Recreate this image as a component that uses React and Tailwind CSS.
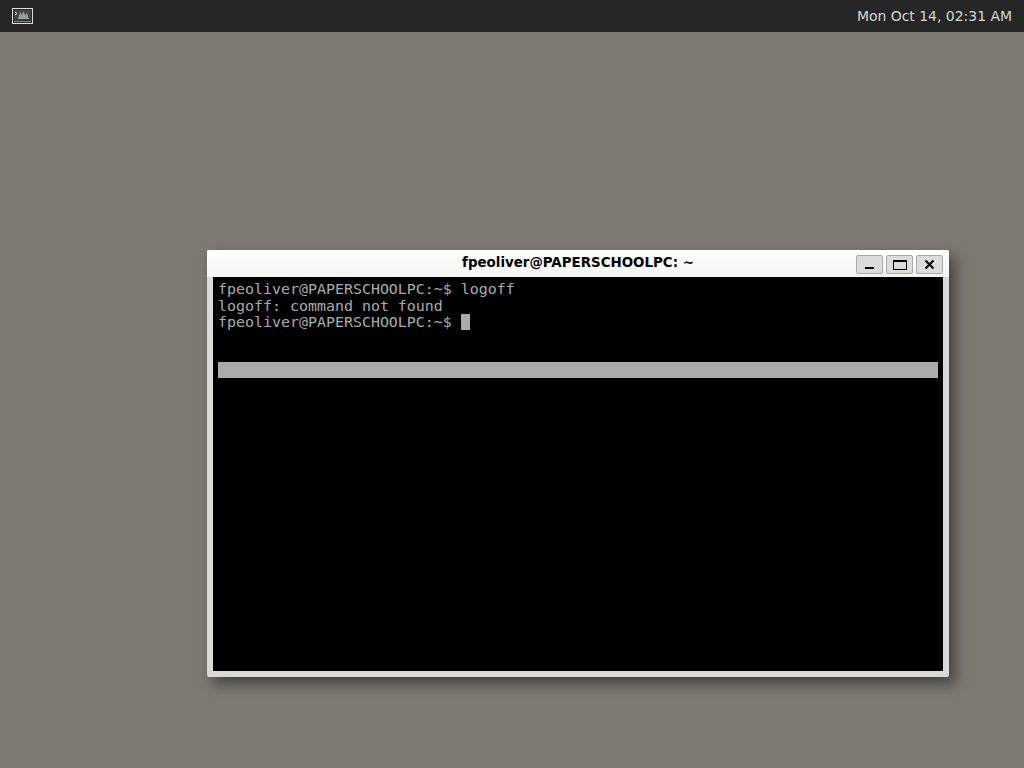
const lines = [
  'fpeoliver@PAPERSCHOOLPC:~$ logoff',
  'logoff: command not found',
];

function TermIcon() {
  return (
    <svg width="21" height="16" viewBox="0 0 21 16" className="block">
      <rect x="0.5" y="0.5" width="20" height="15" fill="#2b2b2b" stroke="#dcdcdc" />
      <rect x="2" y="2" width="17" height="10" fill="#3d4242" />
      <path d="M3 4l2 1.5L3 7" fill="none" stroke="#e6e6e6" />
      <path d="M6 11l2-7 2 3 1.5-4 1.5 4 2-2 2 6z" fill="#9a9d9d" />
      <rect x="2" y="13" width="17" height="1" fill="#8a8a8a" />
    </svg>
  );
}

function WinButton({ children }) {
  return (
    <div className="flex h-[19px] w-[27px] items-center justify-center rounded-[2px] border border-[#a8a8a6] bg-[#dcdcda]">
      {children}
    </div>
  );
}

export default function App() {
  return (
    <div className="relative h-[768px] w-[1024px] overflow-hidden bg-[#7d7973] font-['DejaVu_Sans',sans-serif]">
      <div className="flex h-8 items-center justify-between bg-[#262626] pl-3 pr-3">
        <TermIcon />
        <span className="text-[13.95px] text-[#d6d6d6]">Mon Oct 14, 02:31 AM</span>
      </div>

      {/* terminal window */}
      <div className="absolute left-[207px] top-[250px] flex h-[427px] w-[742px] flex-col rounded-[2px] bg-[#d9d9d7] px-[6px] pb-[6px] shadow-[6px_7px_14px_rgba(30,30,28,0.6)]">
        <div className="relative -mx-[6px] flex h-[27px] items-center justify-center rounded-t-[2px] bg-gradient-to-b from-white to-[#f4f4f3]">
          <div className="text-[13.4px] font-bold text-black">fpeoliver@PAPERSCHOOLPC: ~</div>
          <div className="absolute right-[6px] top-[5px] flex gap-[3px]">
            <WinButton>
              <span className="mt-[7px] block h-[2px] w-[9px] bg-black" />
            </WinButton>
            <WinButton>
              <span className="block h-[10px] w-[14px] border border-t-2 border-black" />
            </WinButton>
            <WinButton>
              <svg width="11" height="11" viewBox="0 0 11 11">
                <path d="M1.5 1.5l8 8M9.5 1.5l-8 8" stroke="#000" strokeWidth="2" />
              </svg>
            </WinButton>
          </div>
        </div>
        <div className="flex-1 bg-black px-[5px] pt-[4px] font-['DejaVu_Sans_Mono',monospace] text-[14.95px] leading-[16.5px] text-[#ababab]">
          {lines.map((line) => (
            <div key={line} className="whitespace-pre">{line}</div>
          ))}
          <div className="flex items-center whitespace-pre">
            <span>fpeoliver@PAPERSCHOOLPC:~$ </span>
            <span className="block h-[16px] w-[9px] bg-[#ababab]" />
          </div>
          <div className="mt-[31px] h-4 w-[720px] bg-[#aaaaaa]" />
        </div>
      </div>
    </div>
  );
}
